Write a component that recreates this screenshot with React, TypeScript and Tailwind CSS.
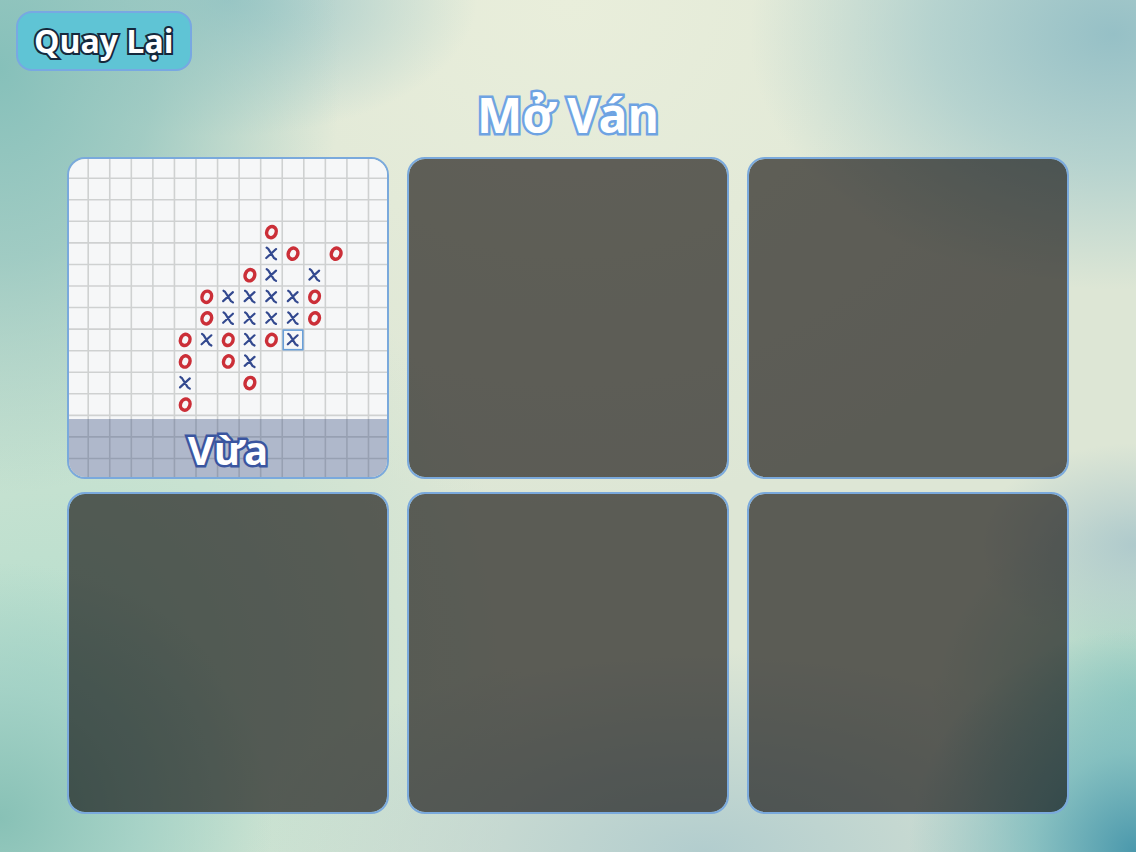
import clsx from 'clsx'

const CELL = 21.56
const ORIGIN = 19.2

// one string per board row, counted from the first full row of the preview
const savedBoard = [
  '',
  '',
  '........O',
  '........XO.O',
  '.......OX.X',
  '.....OXXXXO',
  '.....OXXXXO',
  '....OXOXOX',
  '....O.OX',
  '....X..O',
  '....O',
]

type Move = { row: number; col: number }

type Slot = {
  id: number
  level?: string
  board?: string[]
  lastMove?: Move
}

const slots: Slot[] = [
  { id: 1, level: 'Vừa', board: savedBoard, lastMove: { row: 7, col: 9 } },
  { id: 2 },
  { id: 3 },
  { id: 4 },
  { id: 5 },
  { id: 6 },
]

const outlined = 'font-bold text-white [paint-order:stroke_fill] [stroke-linejoin:round]'

const Mark = ({ kind, x, y }: { kind: string; x: number; y: number }) => {
  if (kind === 'O') {
    return (
      <ellipse
        rx="4.7"
        ry="5.7"
        fill="none"
        stroke="#cb2f38"
        strokeWidth="3.5"
        transform={`translate(${x} ${y}) rotate(20)`}
      />
    )
  }
  return (
    <path
      d="M-4.8 -6 L-3.2 -4.8 L2.6 4.4 L4.6 5.6 M4.6 -4.6 L-5.2 4.4"
      fill="none"
      stroke="#33498f"
      strokeWidth="2.2"
      strokeLinecap="round"
      strokeLinejoin="round"
      transform={`translate(${x} ${y})`}
    />
  )
}

const Board = ({ rows, lastMove }: { rows: string[]; lastMove?: Move }) => {
  const lines = Array.from({ length: 14 }, (_, i) => ORIGIN + i * CELL)

  return (
    <svg viewBox="0 0 318 318" className="block h-full w-full" aria-hidden="true">
      <rect width="318" height="318" fill="#f6f7f8" />
      {lines.map((p) => (
        <path key={p} d={`M${p} 0V318M0 ${p}H318`} stroke="#cfd1d1" strokeWidth="1.6" />
      ))}
      {rows.map((row, r) =>
        row.split('').map((kind, c) =>
          kind === '.' ? null : (
            <Mark
              key={`${r}-${c}`}
              kind={kind}
              x={ORIGIN + (c + 0.5) * CELL}
              y={ORIGIN + (r + 0.5) * CELL}
            />
          )
        )
      )}
      {lastMove && (
        <rect
          x={ORIGIN + lastMove.col * CELL + 1}
          y={ORIGIN + lastMove.row * CELL + 1}
          width={CELL - 2}
          height={CELL - 2}
          fill="none"
          stroke="#6a9fd8"
          strokeWidth="1.6"
        />
      )}
    </svg>
  )
}

const SlotCard = ({ slot }: { slot: Slot }) => (
  <button
    type="button"
    aria-label={slot.level ?? `Ô trống ${slot.id}`}
    className={clsx(
      'relative block aspect-square w-full cursor-pointer overflow-hidden rounded-[18px] border-2 border-[#7aa9dc]',
      !slot.board && 'bg-[#050000]/60 bg-clip-padding'
    )}
  >
    {slot.board && (
      <>
        <Board rows={slot.board} lastMove={slot.lastMove} />
        <span className="absolute inset-x-0 bottom-0 flex h-[58px] items-center justify-center bg-[#3c5282]/38 pt-1">
          <span className={clsx(outlined, 'text-[40px] leading-none [-webkit-text-stroke:5px_#3a559f]')}>
            {slot.level}
          </span>
        </span>
      </>
    )}
  </button>
)

const App = () => {
  return (
    <main className="relative isolate min-h-screen overflow-hidden bg-[#dde6d5] pb-9 font-['Open_Sans','Noto_Sans',sans-serif]">
      <div className="absolute inset-0 -z-10 bg-[radial-gradient(ellipse_20%_26%_at_100%_100%,#4a98ac_0%,#78b9bdcc_45%,#78b9bd00_100%),radial-gradient(ellipse_30%_50%_at_0%_8%,#86c0ba_0%,#93c5bfcc_45%,#a5cfc800_100%),radial-gradient(ellipse_22%_16%_at_20%_0%,#9cc6c8_0%,#9cc6c800_100%),radial-gradient(ellipse_32%_30%_at_98%_4%,#96c0c6_0%,#a6cbccbb_50%,#b5d3cf00_100%),radial-gradient(ellipse_24%_30%_at_0%_96%,#88c1b6_0%,#9ccdc3bb_50%,#9ccdc300_100%),radial-gradient(ellipse_40%_24%_at_62%_100%,#b2cdce_0%,#b2cdce00_100%),radial-gradient(ellipse_14%_12%_at_100%_64%,#afcacc_0%,#afcacc00_100%),radial-gradient(ellipse_18%_22%_at_100%_82%,#9fd2c4_0%,#9fd2c400_100%),radial-gradient(ellipse_42%_60%_at_4%_80%,#b5decd_0%,#b5decd00_100%),radial-gradient(ellipse_50%_60%_at_50%_0%,#e9eedb_0%,#e9eedb00_100%)]" />

      <header className="px-4 pt-[11px]">
        <button
          type="button"
          className="flex h-[60px] cursor-pointer items-center justify-center rounded-2xl border-2 border-[#78a8e2] bg-[#5fc4d5] px-4"
        >
          <span className={clsx(outlined, 'text-[32px] leading-none [-webkit-text-stroke:4px_#16283c]')}>
            Quay Lại
          </span>
        </button>
      </header>

      <h1 className={clsx(outlined, 'mt-4 text-center text-[48px] leading-[56px] [-webkit-text-stroke:5px_#6ea3e2]')}>
        Mở Ván
      </h1>

      <section className="mt-[14px] grid grid-cols-3 gap-x-[18px] gap-y-[13px] px-[67px]">
        {slots.map((slot) => (
          <SlotCard key={slot.id} slot={slot} />
        ))}
      </section>
    </main>
  )
}

export default App
